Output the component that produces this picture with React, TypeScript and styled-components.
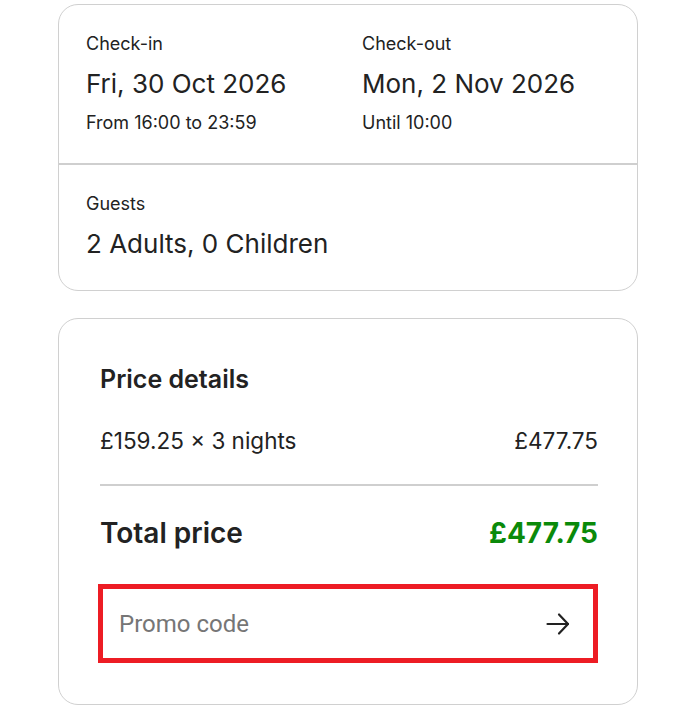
import React from 'react'
import styled, { createGlobalStyle } from 'styled-components'

const GlobalStyle = createGlobalStyle`
    * {
        box-sizing: border-box;
    }
    body {
        margin: 0;
        background: #ffffff;
        font-family: Inter, 'Liberation Sans', sans-serif;
        color: #222222;
    }
`

const Page = styled.div`
    display: flex;
    flex-direction: column;
    gap: 27px;
    width: 580px;
    margin: 4px 0 0 58px;
`

const Card = styled.div`
    border: 1px solid #d0d0d0;
    border-radius: 20px;
    background: #ffffff;
    overflow: hidden;
`

const Section = styled.div`
    padding: 27px 27px 28px;
    & + & {
        border-top: 2px solid #cfcfcf;
        padding-bottom: 29px;
    }
`

const DateGrid = styled.div`
    display: grid;
    grid-template-columns: 1fr 1fr;
    column-gap: 28px;
`

const Label = styled.div`
    font-size: 18px;
    line-height: 24px;
`

const Value = styled.div`
    font-size: 26px;
    line-height: 34px;
    margin-top: 11px;
`

const Note = styled.div`
    font-size: 18px;
    line-height: 24px;
    margin-top: 10px;
`

const PriceBody = styled.div`
    padding: 45px 39px 41px 41px;
`

const Heading = styled.h2`
    margin: 0;
    font-size: 25px;
    line-height: 30px;
    font-weight: 600;
`

const Row = styled.div<{ $total?: boolean }>`
    display: flex;
    justify-content: space-between;
    align-items: center;
    font-size: ${p => (p.$total ? '28px' : '22.5px')};
    font-weight: ${p => (p.$total ? 600 : 400)};
    line-height: ${p => (p.$total ? '36px' : '28px')};
`

const LineRow = styled(Row)`
    margin-top: 33px;
    padding-bottom: 29px;
    border-bottom: 2px solid #cfcfcf;
`

const TotalRow = styled(Row)`
    margin-top: 29px;
`

const TotalAmount = styled.span`
    color: #0a8a0a;
    font-weight: 700;
`

const PromoBox = styled.label`
    display: flex;
    align-items: center;
    margin: 33px 0 0 -2px;
    height: 79px;
    padding: 0 23px 0 14px;
    border: 5px solid #ed1c24;
    cursor: text;
`

const PromoInput = styled.input`
    flex: 1;
    min-width: 0;
    border: none;
    outline: none;
    background: transparent;
    font-family: Roboto, 'Liberation Sans', sans-serif;
    font-size: 24px;
    color: #222222;
    &::placeholder {
        color: #767676;
    }
`

const ArrowButton = styled.button`
    display: flex;
    padding: 0;
    border: none;
    background: none;
    color: #222222;
    cursor: pointer;
`

const ArrowIcon = () => (
    <svg width="24" height="24" viewBox="0 0 24 24" fill="none" stroke="currentColor" strokeWidth="2.2" strokeLinecap="round" strokeLinejoin="round">
        <path d="M1.5 12H22" />
        <path d="M13 2.5l9 9.5-9 9.5" />
    </svg>
)

const App = () => (
    <>
        <GlobalStyle />
        <Page>
            <Card>
                <Section>
                    <DateGrid>
                        <div>
                            <Label>Check-in</Label>
                            <Value>Fri, 30 Oct 2026</Value>
                            <Note>From 16:00 to 23:59</Note>
                        </div>
                        <div>
                            <Label>Check-out</Label>
                            <Value>Mon, 2 Nov 2026</Value>
                            <Note>Until 10:00</Note>
                        </div>
                    </DateGrid>
                </Section>
                <Section>
                    <Label>Guests</Label>
                    <Value>2 Adults, 0 Children</Value>
                </Section>
            </Card>
            <Card>
                <PriceBody>
                    <Heading>Price details</Heading>
                    <LineRow>
                        <span>£159.25 × 3 nights</span>
                        <span>£477.75</span>
                    </LineRow>
                    <TotalRow $total>
                        <span>Total price</span>
                        <TotalAmount>£477.75</TotalAmount>
                    </TotalRow>
                    <PromoBox>
                        <PromoInput placeholder="Promo code" />
                        <ArrowButton type="button" aria-label="Apply promo code">
                            <ArrowIcon />
                        </ArrowButton>
                    </PromoBox>
                </PriceBody>
            </Card>
        </Page>
    </>
)

export default App
